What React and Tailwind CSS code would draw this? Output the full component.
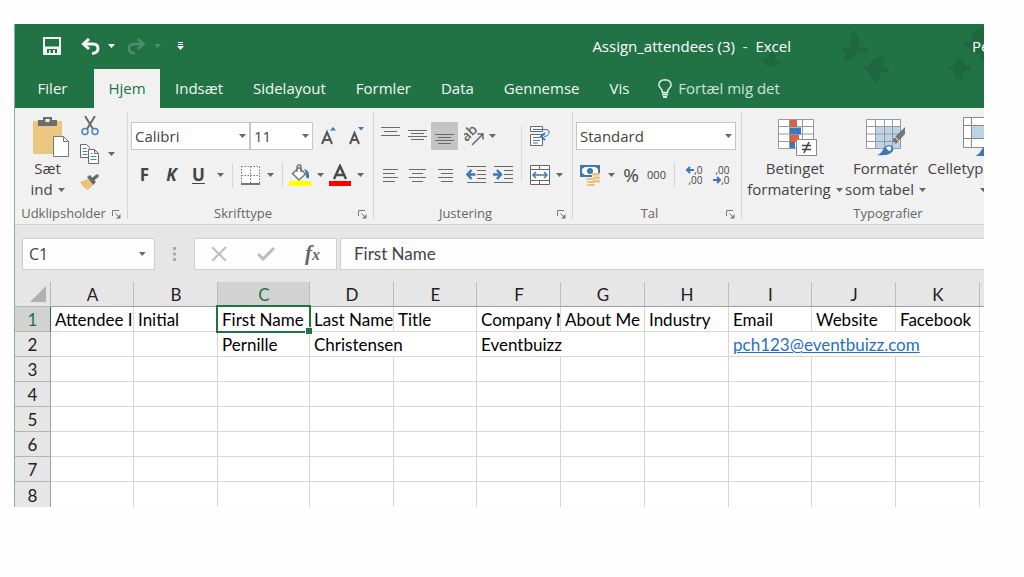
import { useState } from 'react'

const TABS = ['Filer', 'Hjem', 'Indsæt', 'Sidelayout', 'Formler', 'Data', 'Gennemse', 'Vis']

const COLUMNS = [
  { name: 'A', width: 'w-[83px]' },
  { name: 'B', width: 'w-[84px]' },
  { name: 'C', width: 'w-[92px]' },
  { name: 'D', width: 'w-[84px]' },
  { name: 'E', width: 'w-[83px]' },
  { name: 'F', width: 'w-[84px]' },
  { name: 'G', width: 'w-[84px]' },
  { name: 'H', width: 'w-[84px]' },
  { name: 'I', width: 'w-[83px]' },
  { name: 'J', width: 'w-[84px]' },
  { name: 'K', width: 'w-[84px]' },
  { name: '', width: 'w-auto' },
]

// span: the text runs over the empty neighbours to the right
const ROWS = [
  [
    { text: 'Attendee ID' }, { text: 'Initial' }, { text: 'First Name', selected: true },
    { text: 'Last Name' }, { text: 'Title' }, { text: 'Company Name' }, { text: 'About Me' },
    { text: 'Industry' }, { text: 'Email' }, { text: 'Website' }, { text: 'Facebook' }, { text: 'Twitter' },
  ],
  [
    {}, {}, { text: 'Pernille' }, { text: 'Christensen', span: 2 }, { text: 'Eventbuizz', span: 2 },
    {}, { text: 'pch123@eventbuizz.com', span: 3, link: true }, {},
  ],
  ...Array.from({ length: 6 }, () => COLUMNS.map(() => ({}))),
]

function Caret({ className = 'text-[#666]' }) {
  return (
    <svg width="7" height="4" viewBox="0 0 7 4" className={className} aria-hidden="true">
      <path d="M0 0h7L3.5 4z" fill="currentColor" />
    </svg>
  )
}

function IconButton({ label, className = 'w-[27px]', children }) {
  return (
    <button type="button" aria-label={label} className={`flex h-7 shrink-0 items-center justify-center ${className}`}>
      {children}
    </button>
  )
}

function CaretButton({ label, className = 'w-4' }) {
  return (
    <IconButton label={label} className={className}>
      <Caret />
    </IconButton>
  )
}

function Picker({ label, value, className }) {
  return (
    <label className={`relative h-7 shrink-0 ${className}`}>
      <select
        aria-label={label}
        defaultValue={value}
        className="block h-full w-full appearance-none border border-[#c6c6c6] bg-white pl-[3px] text-[15px] text-[#444] outline-none"
      >
        <option>{value}</option>
      </select>
      <span className="pointer-events-none absolute inset-y-0 right-1 flex items-center">
        <Caret />
      </span>
    </label>
  )
}

function Separator() {
  return <span className="ml-1 mr-[5px] h-6 w-px shrink-0 bg-[#d4d4d4]" />
}

function Group({ label, className, launcher = true, children }) {
  return (
    <section aria-label={label} className={`flex shrink-0 flex-col ${className}`}>
      <div className="flex h-24 px-[3px]">{children}</div>
      <div className="flex h-5 items-center text-[13px] text-[#666]">
        <span className="flex-1 text-center">{label}</span>
        {launcher && (
          <button type="button" aria-label={`${label}, indstillinger`} className="mr-1.5">
            <svg width="9" height="9" viewBox="0 0 9 9" fill="none" stroke="#777" strokeWidth="1">
              <path d="M.5 6V.5H7M3.5 3.5l3 3" />
              <path d="M8.5 4v4.5H4z" fill="#777" stroke="none" />
            </svg>
          </button>
        )}
      </div>
    </section>
  )
}

function Divider() {
  return <span className="mb-[5px] mt-1 w-px shrink-0 bg-[#d4d4d4]" />
}

function BigButton({ lines, className = '', children }) {
  return (
    <button
      type="button"
      className={`mt-2 flex h-[84px] shrink-0 flex-col items-center whitespace-nowrap text-[15px] leading-[21px] text-[#444] ${className}`}
    >
      <span className="flex h-[42px] items-center">{children}</span>
      <span>{lines[0]}</span>
      <span className="flex h-[21px] items-center gap-[5px]">
        {lines[1]}
        <Caret />
      </span>
    </button>
  )
}

/* three or four text lines; each entry is [x1, x2] */
function AlignIcon({ lines, top = 0, step = 4 }) {
  return (
    <svg width="20" height="20" viewBox="0 0 20 20" stroke="#6a6a6a" strokeWidth="1">
      {lines.map(([a, b], i) => (
        <path key={i} d={`M${a} ${top + i * step + 0.5}H${b}`} />
      ))}
    </svg>
  )
}

function IndentIcon({ out }) {
  return (
    <svg width="20" height="20" viewBox="0 0 20 20" stroke="#6a6a6a">
      <path d="M1 1.500H20M11 5.500H20M11 9.500H20M11 13.500H20M1 17.500H20" />
      {out
        ? <path d="M9.500 9.500H2M5.500 5L1.500 9.500l4 4.500" fill="none" stroke="#3b78b8" strokeWidth="2.500" />
        : <path d="M0 9.500H7.500M4 5l4 4.500L4 14" fill="none" stroke="#3b78b8" strokeWidth="2.500" />}
    </svg>
  )
}

function DecimalIcon({ more }) {
  return (
    <span className="flex w-[18px] flex-col items-end text-[10px] leading-[10px] text-[#444]">
      <span className="flex items-center">
        {more && (
          <svg width="8" height="8" viewBox="0 0 8 8" fill="none" stroke="#3b78b8" strokeWidth="2"><path d="M8 4H2M4 1L1 4l3 3" /></svg>
        )}
        {more ? ',0' : ',00'}
      </span>
      <span className="flex items-center">
        {!more && (
          <svg width="8" height="8" viewBox="0 0 8 8" fill="none" stroke="#3b78b8" strokeWidth="2"><path d="M0 4h6M4 1l3 3l-3 3" /></svg>
        )}
        {more ? ',00' : ',0'}
      </span>
    </span>
  )
}

function Birds() {
  return (
    <svg width="240" height="84" viewBox="0 0 240 84" className="absolute right-0 top-0 text-[#1e673f]" fill="currentColor" aria-hidden="true">
      <path d="M17 34q4 1 6 1q1-5 5-8q4 4 3 9q5 1 8 4l-7 1q-4 1-8 1q-4-1-5-4q-1-2-2-4z" />
      <path d="M97 23q5 2 8 1q0-12 5-18q7 6 5 17q7-1 10 3l-2 2q-5-1-9 1q-5 6-13 8q0-6 2-9q-4-1-6-5z" />
      <path d="M117 43q4-2 8 0q1-7 7-9q5-3 10-1q-3 3-4 10q4 0 7 2l-1 3q-5-1-8 2q-1 5-3 9q-6-3-7-9q-3-4-9-7z" />
      <path d="M201 43q6-2 9 0q1-8 5-9q5 1 6 8q4-1 6 0l-1 5q-4-1-6 1q-1 7-3 11q-6-4-7-11q-3-4-9-5z" />
      <path d="M218 20q6-2 10-2q-1-8 3-12q4-3 9-4v34l-6-1l4-5q-10-2-12-5q-3-3-8-5z" />
    </svg>
  )
}

function TitleBar() {
  return (
    <div className="flex h-11 items-center whitespace-nowrap text-[15px] text-white">
      <div className="flex items-center pl-7">
        <button type="button" aria-label="Gem">
          <svg width="18" height="18" viewBox="0 0 18 18" fill="#f3f3f3">
            <path fillRule="evenodd" d="M0 0h18v18H0zM2 2v7.500h14V2zM4 12v4h2v-3h1.500v3H14v-4z" />
            <path d="M10 13h2v3h-2z" />
          </svg>
        </button>
        <button type="button" aria-label="Fortryd" className="ml-5">
          <svg width="19" height="17" viewBox="0 0 19 17" fill="none" stroke="#f3f3f3" strokeWidth="3">
            <path d="M3 6h9q5 0 5 4.500t-6 5" />
            <path d="M8 .8L2.500 6l5.500 5" />
          </svg>
        </button>
        <button type="button" aria-label="Fortryd, flere" className="ml-2"><Caret className="text-white" /></button>
        <button type="button" aria-label="Gentag" disabled className="ml-3">
          <svg width="19" height="17" viewBox="0 0 19 17" fill="none" stroke="#4d8f6b" strokeWidth="2.500">
            <path d="M16 6H8Q2 6 2 10.500t6 5M11 1l5.500 5l-5.500 5" />
          </svg>
        </button>
        <button type="button" aria-label="Gentag, flere" disabled className="ml-2"><Caret className="text-[#4d8f6b]" /></button>
        <button type="button" aria-label="Tilpas værktøjslinjen Hurtig adgang" className="ml-4">
          <svg width="7" height="8" viewBox="0 0 7 8" fill="#fff"><path d="M1 0h5v1H1zM1 2h5v1H1zM0 4h7L3.500 8z" /></svg>
        </button>
      </div>
      <h1 className="ml-auto whitespace-pre">Assign_attendees (3)  -  Excel</h1>
      <span className="w-[193px] overflow-hidden pl-[181px]">Pernille</span>
    </div>
  )
}

function TabBar({ active, onSelect }) {
  return (
    <nav className="flex h-10 items-stretch whitespace-nowrap pt-px text-[15px]">
      {TABS.map((tab, i) => (
        <button
          key={tab}
          type="button"
          onClick={() => onSelect(tab)}
          className={`shrink-0 ${i === 0 ? 'w-[79px] pr-1' : i === 1 ? 'w-[66px]' : 'px-[15px]'} ${tab === active ? 'bg-[#f1f1f1] text-[#217346]' : 'text-[#f3f8f5]'}`}
        >
          {tab}
        </button>
      ))}
      <button type="button" className="ml-3.5 flex items-center gap-1.5 text-[#cfe2d7]">
        <svg width="14" height="19" viewBox="0 0 14 19" fill="none" stroke="#dcebe3" strokeWidth="1.500">
          <path d="M4.500 13.500q0-2.500-2-4.500Q.8 7.500.8 5.800Q1.300 1 7 .8q5.700.2 6.200 5q0 1.700-1.700 3.200q-2 2-2 4.500z" />
          <path d="M4 15.500h6M5 18h4" strokeWidth="2" />
        </svg>
        Fortæl mig det
      </button>
    </nav>
  )
}

function ClipboardGroup() {
  return (
    <Group label="Udklipsholder" className="w-28">
      <BigButton lines={['Sæt', 'ind']} className="w-[60px] pr-px">
        <svg width="37" height="40" viewBox="0 0 37 40" className="ml-2">
          <path d="M0 4h29v33H0z" fill="#eac681" />
          <path d="M5 3h5V0h9v3h5v6H5z" fill="#6d6d6d" />
          <path d="M12.500 2h4v3h-4z" fill="#f1f1f1" />
          <path d="M20.500 19.500h10l5 5v15h-15z" fill="#fff" stroke="#777" />
          <path d="M30.500 19.500v5h5" fill="none" stroke="#777" />
        </svg>
      </BigButton>
      <div className="-ml-0.5 flex flex-col pt-1">
        <IconButton label="Klip">
          <svg width="18" height="20" viewBox="0 0 18 20" fill="none">
            <path d="M4 0l8 13M14 0L6 13" stroke="#6a6a6a" strokeWidth="2" />
            <circle cx="4" cy="15.500" r="3" stroke="#4a84c0" strokeWidth="1.500" />
            <circle cx="14" cy="15.500" r="3" stroke="#4a84c0" strokeWidth="1.500" />
          </svg>
        </IconButton>
        <div className="flex">
          <IconButton label="Kopiér">
            <svg width="19" height="20" viewBox="0 0 19 20" fill="#fff" stroke="#6a6a6a">
              <path d="M.5.5h6l3 3v10h-9z" />
              <path d="M2.500 4.500h4M2.500 7.500h5M2.500 10.500h5" stroke="#4a84c0" />
              <path d="M8.500 5.500h6l4 4v10h-10zM14.500 5.500v4h4" />
              <path d="M10.500 9.500h2M10.500 12.500h6M10.500 15.500h6" stroke="#4a84c0" />
            </svg>
          </IconButton>
          <CaretButton label="Kopiér, flere" />
        </div>
        <IconButton label="Formatpensel">
          <svg width="19" height="18" viewBox="0 0 19 18">
            <path d="M0 9l8-3l5 6l-5 5q-5-2-8-8z" fill="#eac07a" />
            <path d="M7 4l3-2l6 7l-3 3z" fill="#6a6a6a" />
            <path d="M12 7l5-4" stroke="#6a6a6a" strokeWidth="3.500" strokeLinecap="round" />
          </svg>
        </IconButton>
      </div>
    </Group>
  )
}

function FontGroup() {
  return (
    <Group label="Skrifttype" className="w-[245px]">
      <div className="flex flex-col gap-[11px] pt-3.5">
        <div className="flex">
          <Picker label="Skrifttype" value="Calibri" className="w-[119px]" />
          <Picker label="Skriftstørrelse" value="11" className="mr-0.5 w-[63px]" />
          <IconButton label="Forøg skriftstørrelse" className="w-7">
            <svg width="16" height="18" viewBox="0 0 16 18" fill="none" stroke="#555" strokeWidth="2">
              <path d="M1 17L6 5l5 12M3 13h6" />
              <path d="M9 3.500h6L12 0z" fill="#3b78b8" stroke="none" />
            </svg>
          </IconButton>
          <IconButton label="Formindsk skriftstørrelse" className="w-7">
            <svg width="16" height="18" viewBox="0 0 16 18" fill="none" stroke="#555" strokeWidth="2">
              <path d="M1 17L5.500 6L10 17M3 13h5" />
              <path d="M9 0h6l-3 3.500z" fill="#3b78b8" stroke="none" />
            </svg>
          </IconButton>
        </div>
        <div className="flex items-center text-[17px] font-bold text-[#444]">
          <IconButton label="Fed">F</IconButton>
          <IconButton label="Kursiv"><span className="italic">K</span></IconButton>
          <IconButton label="Understreget"><span className="underline underline-offset-2">U</span></IconButton>
          <CaretButton label="Understreget, flere" />
          <Separator />
          <IconButton label="Kanter" className="w-6">
            <svg width="19" height="19" viewBox="0 0 19 19" fill="#fff" stroke="#777">
              <path d="M.5.500h18v17H.5zM9.500.500v17M.5 9.500h18" strokeDasharray="1.500 1.500" />
              <path d="M0 18h19" strokeWidth="2" />
            </svg>
          </IconButton>
          <CaretButton label="Kanter, flere" />
          <Separator />
          <IconButton label="Fyldfarve" className="w-6">
            <svg width="22" height="22" viewBox="0 0 22 22">
              <path d="M15 5q6 1 5 9q-2 1-3-1V9z" fill="#3b78b8" />
              <path d="M3.500 9.500L10 3.500l6.500 6.500l-6.500 6z" fill="#fff" stroke="#777" strokeWidth="1.500" />
              <path d="M8 8V2.500Q9.500-.5 12 2v6" fill="none" stroke="#777" strokeWidth="1.500" />
              <path d="M0 17h22v5H0z" fill="#ff0" />
            </svg>
          </IconButton>
          <CaretButton label="Fyldfarve, flere" />
          <IconButton label="Skriftfarve" className="w-6">
            <svg width="22" height="22" viewBox="0 0 22 22">
              <path d="M5 15l6-13l6 13M7.500 11h7" fill="none" stroke="#4a4a4a" strokeWidth="2.500" />
              <path d="M0 17h22v5H0z" fill="#f00" />
            </svg>
          </IconButton>
          <CaretButton label="Skriftfarve, flere" />
        </div>
      </div>
    </Group>
  )
}

function AlignGroup() {
  return (
    <Group label="Justering" className="w-[198px]">
      <div className="flex w-36 flex-col gap-[11px] pt-3.5">
        <div className="flex">
          <IconButton label="Justér øverst"><AlignIcon lines={[[0, 19], [3, 16], [0, 19]]} top={1} /></IconButton>
          <IconButton label="Centrér lodret"><AlignIcon lines={[[0, 19], [3, 16], [0, 19], [3, 16]]} top={4} step={3} /></IconButton>
          <IconButton label="Justér nederst" className="w-[27px] bg-[#c5c5c5]">
            <AlignIcon lines={[[0, 19], [3, 16], [0, 19], [3, 16]]} top={8} step={3} />
          </IconButton>
          <IconButton label="Retning" className="ml-1 w-6">
            <svg width="20" height="20" viewBox="0 0 20 20" fill="none" stroke="#666" strokeWidth="1.500">
              <text x="-1" y="12" transform="rotate(-45 6 10)" fontFamily="'Open Sans', sans-serif" fontSize="14" fontWeight="600" fill="#666" stroke="none">ab</text>
              <path d="M8 19L19 8M13.500 8H19v5.500" />
            </svg>
          </IconButton>
          <CaretButton label="Retning, flere" className="w-3" />
        </div>
        <div className="flex">
          <IconButton label="Venstrestil"><AlignIcon lines={[[2, 17], [2, 14], [2, 17], [2, 14]]} top={4} /></IconButton>
          <IconButton label="Centrér"><AlignIcon lines={[[1, 18], [4, 15], [1, 18], [4, 15]]} top={4} /></IconButton>
          <IconButton label="Højrestil"><AlignIcon lines={[[3, 18], [6, 18], [3, 18], [6, 18]]} top={4} /></IconButton>
          <IconButton label="Formindsk indrykning" className="ml-1 w-[27px]"><IndentIcon out /></IconButton>
          <IconButton label="Forøg indrykning"><IndentIcon /></IconButton>
        </div>
      </div>
      <span className="mr-1 mt-[18px] h-14 w-px bg-[#d9d9d9]" />
      <div className="flex flex-col gap-[11px] pt-3.5">
        <IconButton label="Ombryd tekst">
          <svg width="20" height="20" viewBox="0 0 20 20" fill="none" stroke="#6a6a6a">
            <path d="M.5.500h12v5H.5zM.5 8.500h12v11H.5z" fill="#fff" />
            <path d="M3 3.500h14q3 1 2 4t-5 3M3 11.500h7M3 14.500h7M3 17h5" stroke="#3b78b8" />
            <path d="M15 7l-4 3.500l4 3.500" stroke="#3b78b8" strokeWidth="2" />
          </svg>
        </IconButton>
        <div className="flex">
          <IconButton label="Flet og centrér">
            <svg width="20" height="20" viewBox="0 0 20 20" fill="none" stroke="#666">
              <path d="M.5.500h19v19H.5zM.5 4.500h19M.5 15.500h19M9.500.500v4M9.500 15.500v4" fill="#fff" />
              <path d="M3 10h14M6 7l-3 3l3 3M14 7l3 3l-3 3" stroke="#3b78b8" strokeWidth="1.500" />
            </svg>
          </IconButton>
          <CaretButton label="Flet og centrér, flere" className="w-3" />
        </div>
      </div>
    </Group>
  )
}

function NumberGroup() {
  return (
    <Group label="Tal" className="w-[168px]">
      <div className="flex flex-col gap-[11px] pt-3.5">
        <Picker label="Talformat" value="Standard" className="w-40" />
        <div className="flex items-center text-[#444]">
          <IconButton label="Valutaformat">
            <svg width="20" height="21" viewBox="0 0 20 21">
              <path d="M0 0h20v12H0z" fill="#3b78b8" />
              <path d="M2 4l3-2h10l3 2v4l-3 2H5L2 8z" fill="#fff" />
              <circle cx="10" cy="6" r="3" fill="#3b78b8" />
              <path d="M12 8h8v9h-8zM6 13h8v7H6z" fill="#f1f1f1" />
              <g fill="#eac07a">
                <rect x="12" y="8" width="8" height="2.500" rx="1" />
                <rect x="13" y="11.500" width="7" height="2.500" rx="1" />
                <rect x="13" y="15" width="7" height="2.500" rx="1" />
                <rect x="6" y="13" width="8" height="2" rx="1" />
                <rect x="7" y="16" width="8" height="2" rx="1" />
                <rect x="7" y="19" width="8" height="2" rx="1" />
              </g>
            </svg>
          </IconButton>
          <CaretButton label="Valutaformat, flere" />
          <IconButton label="Procent" className="w-6"><span className="text-[19px]">%</span></IconButton>
          <IconButton label="Tusindtalsseparator"><span className="text-[11px]">000</span></IconButton>
          <Separator />
          <IconButton label="Flere decimaler"><DecimalIcon more /></IconButton>
          <IconButton label="Færre decimaler"><DecimalIcon /></IconButton>
        </div>
      </div>
    </Group>
  )
}

function StylesGroup() {
  return (
    <Group label="Typografier" className="w-[292px]" launcher={false}>
      <div className="flex gap-[3px] pl-[3px]">
        <BigButton lines={['Betinget', 'formatering']} className="w-[94px]">
          <svg width="39" height="37" viewBox="0 0 39 37" className="ml-1">
            <path d="M.5.500h35v29H.5zM.5 7.500h35M.5 15h35M.5 22.500h35M11.500.500v29M24.500.500v29" fill="#fff" stroke="#999" />
            <path d="M12 1h7v7h-7zM12 16h9v7h-9z" fill="#d9633f" />
            <path d="M12 8.500h11v7H12zM12 23h5v6h-5z" fill="#3b78b8" />
            <path d="M18.500 20.500h20v16h-20z" fill="#fff" stroke="#888" />
            <path d="M24 26.500h9M24 30.500h9M31 23l-5 11" stroke="#444" strokeWidth="1.500" />
          </svg>
        </BigButton>
        <BigButton lines={['Formatér', 'som tabel']} className="w-[81px]">
          <svg width="40" height="37" viewBox="0 0 40 37">
            <path d="M.5.500h34v29H.5z" fill="#fff" />
            <path d="M9 8h26v22H9z" fill="#bdd3ea" />
            <path d="M.5.500h34v29H.5zM.5 7.500h34M.5 15h34M.5 22.500h34M9.500.500v29M18.500.500v29M26.500.500v29" fill="none" stroke="#999" />
            <path d="M39 8v7l-9 10l-4-4z" fill="#777" />
            <path d="M29 18l5 5" stroke="#f1f1f1" />
            <path d="M11 36q4-1 7-7q4-5 8-2q3 4-1 7q-4 3-14 2z" fill="#3b78b8" />
            <path d="M20 29q2-3 5-1q1 3-2 4z" fill="#fff" />
          </svg>
        </BigButton>
        <BigButton lines={['Celletypografier', '']} className="w-28 pr-1">
          <svg width="40" height="40" viewBox="0 0 40 40">
            <path d="M.5.500h38v30H.5zM.5 8.500h38M.5 21.500h38M8.500.500v30" fill="#fff" stroke="#888" />
            <path d="M9 9h26v12H9z" fill="#bdd3ea" />
            <path d="M12 39q4-1 7-7q4-4 8 0q2 5-3 7z" fill="#3b78b8" />
          </svg>
        </BigButton>
      </div>
    </Group>
  )
}

function FormulaBar() {
  return (
    <div className="flex h-[57px] items-center bg-[#e6e6e6] pl-[7px] text-[#444]">
      <div className="flex h-8 w-[133px] shrink-0 items-center border border-[#cfcfcf] bg-[#fdfdfd] pr-2">
        <input aria-label="Navneboks" defaultValue="C1" className="w-full min-w-0 bg-transparent pl-1.5 text-[16px] outline-none" />
        <Caret />
      </div>
      <svg width="3" height="14" viewBox="0 0 3 14" fill="#aaa" className="mx-[18px] shrink-0" aria-hidden="true">
        <path d="M0 0h3v3H0zM0 5.500h3v3H0zM0 11h3v3H0z" />
      </svg>
      <div className="mr-[3px] flex h-8 w-[143px] shrink-0 items-center border border-[#cfcfcf] bg-[#fdfdfd]">
        <IconButton label="Annuller" className="w-[47px]">
          <svg width="16" height="14" viewBox="0 0 16 14" fill="none" stroke="#bdbdbd" strokeWidth="2"><path d="M1 0l14 14M15 0L1 14" /></svg>
        </IconButton>
        <IconButton label="Enter" className="w-[47px]">
          <svg width="18" height="14" viewBox="0 0 18 14" fill="none" stroke="#bdbdbd" strokeWidth="3"><path d="M1 7l5 5L17 1" /></svg>
        </IconButton>
        <IconButton label="Indsæt funktion" className="w-[47px]">
          <span className="font-['Liberation_Serif',serif] text-[21px] font-bold italic leading-none text-[#666]">
            f<span className="text-[16px]">x</span>
          </span>
        </IconButton>
      </div>
      <input
        aria-label="Formellinje"
        defaultValue="First Name"
        className="h-8 min-w-0 flex-1 border border-r-0 border-[#cfcfcf] bg-[#fdfdfd] pl-[13px] font-[Lato,sans-serif] text-[17px] outline-none"
      />
    </div>
  )
}

function Cell({ cell, last }) {
  return (
    <td
      colSpan={cell.span}
      className={`whitespace-nowrap border-r border-[#d6d6d6] bg-white p-0 pl-1 pt-px last:border-r-0 ${last ? '' : 'border-b'} ${cell.selected ? 'relative' : 'overflow-hidden'}`}
    >
      {cell.link ? <a href="mailto:pch123@eventbuizz.com" className="text-[#1f6fc9] underline">{cell.text}</a> : cell.text}
      {cell.selected && (
        <span className="absolute -left-0.5 -top-0.5 -right-0.5 -bottom-0.5 border-2 border-[#217346]">
          <span className="absolute -bottom-[3px] -right-[3px] size-1.5 bg-[#217346] outline outline-white" />
        </span>
      )}
    </td>
  )
}

function Sheet() {
  return (
    <table className="w-full table-fixed border-separate border-spacing-0 font-[Lato,sans-serif] text-[17px] leading-[23px] text-black">
      <colgroup>
        <col className="w-9" />
        {COLUMNS.map(col => <col key={col.name} className={col.width} />)}
      </colgroup>
      <thead>
        <tr className="h-[25px] bg-[#e6e6e6]">
          <th aria-label="Markér alt" className="border-b border-r border-[#b5b5b5] p-0">
            <svg width="16" height="16" viewBox="0 0 16 16" className="ml-auto mr-1"><path d="M16 0v16H0z" fill="#b1b1b1" /></svg>
          </th>
          {COLUMNS.map(col => (
            <th
              key={col.name}
              scope="col"
              className={`border-b border-r border-b-[#a0a0a0] border-r-[#bdbdbd] p-0 pl-px pt-px font-normal last:border-r-0 ${col.name === 'C' ? 'bg-[#d2d2d2] text-[#217346]' : 'text-[#222]'}`}
            >
              {col.name}
            </th>
          ))}
        </tr>
      </thead>
      <tbody>
        {ROWS.map((cells, r) => (
          <tr key={r} className="h-[25px]">
            <th
              scope="row"
              className={`border-r p-0 pt-px font-normal ${r < ROWS.length - 1 ? 'border-b border-b-[#b5b5b5]' : ''} ${r === 0 ? 'border-r-[#217346] bg-[#d2d2d2] text-[#217346]' : 'border-r-[#a0a0a0] bg-[#e6e6e6] text-[#222]'}`}
            >
              {r + 1}
            </th>
            {cells.map((cell, c) => <Cell key={c} cell={cell} last={r === ROWS.length - 1} />)}
          </tr>
        ))}
      </tbody>
    </table>
  )
}

export default function App() {
  const [tab, setTab] = useState('Hjem')

  return (
    <div className="min-h-screen bg-[#fefefe] pl-3.5 pr-10 pt-6 font-['Open_Sans',sans-serif]">
      <main className="overflow-hidden border-l border-[#86b39b]">
        <header className="relative bg-[#217346]">
          <Birds />
          <div className="relative">
            <TitleBar />
            <TabBar active={tab} onSelect={setTab} />
          </div>
        </header>
        <div className="flex overflow-hidden border-b border-[#d0d0d0] bg-[#f1f1f1]">
          <ClipboardGroup />
          <Divider />
          <FontGroup />
          <Divider />
          <AlignGroup />
          <Divider />
          <NumberGroup />
          <Divider />
          <StylesGroup />
        </div>
        <FormulaBar />
        <Sheet />
      </main>
    </div>
  )
}
